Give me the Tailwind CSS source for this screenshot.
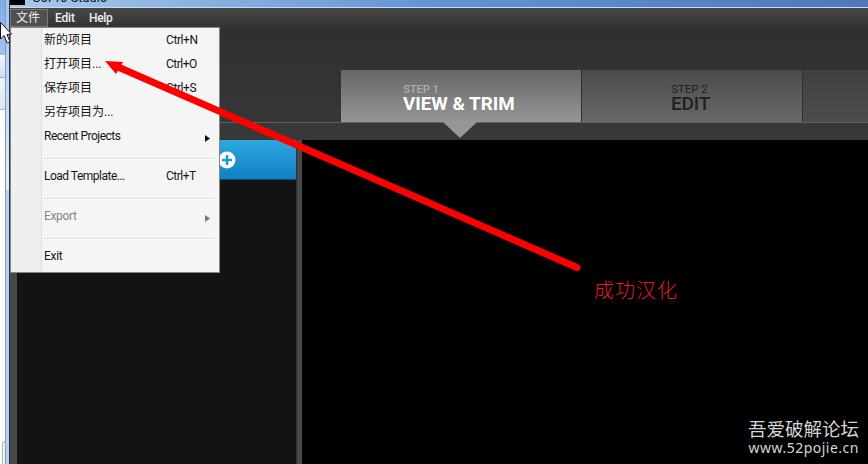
<!DOCTYPE html>
<html lang="zh-CN">
<head>
<meta charset="utf-8">
<title>GoPro Studio</title>
<script src="https://cdn.jsdelivr.net/npm/@tailwindcss/browser@4"></script>
</head>
<body class="relative flex h-[464px] w-[868px] overflow-hidden bg-white font-[Roboto,'Noto_Sans_CJK_SC',sans-serif]">
  <!-- Window behind and frame edge -->
  <aside class="flex h-full w-[9px] shrink-0">
    <div class="flex w-[5px] flex-col">
      <div class="h-[54px] bg-linear-to-b from-[#7fa9e6] to-[#a1c3f5]"></div>
      <div class="h-6 border-y border-[#a4b6cd] bg-linear-to-b from-[#f3f7fc] to-[#d3dfee]"></div>
      <div class="h-8 border-b border-[#a4b6cd] bg-linear-to-b from-[#eef3fa] to-[#dce7f5]"></div>
      <div class="grow bg-white"></div>
      <div class="ml-[2px] h-[23px] rounded-tl border-l border-t border-[#b5b5b5] bg-[#f2f2f2]"></div>
    </div>
    <div class="flex w-1 flex-col border-l border-[#809dc1]">
      <div class="h-[190px] bg-linear-to-b from-[#a4c5f2] to-[#e3edf9]"></div>
      <div class="grow bg-[#b9d0ef]"></div>
    </div>
  </aside>

  <main class="flex min-w-0 grow flex-col border-l border-[#28384c] bg-[#383838]">
    <header class="flex h-[8px] shrink-0 overflow-hidden border-b border-[#c3dcf4] bg-linear-to-r from-[#a9c9ed] via-[#6294d3] to-[#4e79b6]">
      <div class="h-[5px] w-[15px] bg-black"></div>
      <div class="ml-[7px] mt-[-9px] text-[12.5px] leading-[14px] tracking-[0.15px] text-[#111]">GoPro Studio</div>
    </header>
    <nav class="flex h-[22px] shrink-0 bg-linear-to-b from-[#484848] to-[#303030] text-[12px] font-medium leading-[18px] tracking-[-0.35px] text-[#eee]">
      <div class="mt-px h-[18px] w-[38px] border border-[#777] bg-[#505050] pl-[5px] font-normal leading-[16px] tracking-normal">文件</div>
      <div class="ml-[7px] mt-px w-[34px] tracking-[-0.2px]">Edit</div>
      <div class="mt-px">Help</div>
    </nav>
    <section class="flex h-[93px] shrink-0 items-end border-b border-[#606060] bg-linear-to-b from-[#303030] to-[#363636] pl-[331px]">
      <div class="relative h-[52px] w-[240px] bg-linear-to-b from-[#676767] to-[#969696] pl-[62px] pt-[13px]">
        <div class="text-[11.5px] font-medium leading-[12px] tracking-[-0.25px] text-[#adadad]">STEP 1</div>
        <div class="w-max origin-left scale-x-[0.99] whitespace-nowrap text-[19px] font-bold leading-[18px] text-white">VIEW &amp; TRIM</div>
        <svg class="absolute left-[102px] top-[52px]" width="34" height="17" viewBox="0 0 34 17"><path d="M0 0H34L17 16Z" fill="#979797"/></svg>
      </div>
      <div class="h-[52px] w-[222px] border-x border-[#303030] bg-linear-to-b from-[#4b4b4b] to-[#686868] pl-[89px] pt-[13px] text-[#202020]">
        <div class="text-[11.5px] leading-[12px]">STEP 2</div>
        <div class="text-[19px] font-medium leading-[18px] tracking-[-0.2px]">EDIT</div>
      </div>
      <div class="h-[52px] grow bg-linear-to-b from-[#404040] to-[#4c4c4c]"></div>
    </section>
    <div class="h-[17px] shrink-0 bg-[#383838]"></div>
    <section class="flex min-h-0 grow bg-[#484848]">
      <div class="ml-[7px] flex w-[280px] shrink-0 flex-col border-r border-[#303030] bg-[#131313]">
        <div class="flex h-10 items-center border-b border-[#0b4d76] bg-linear-to-b from-[#2ca9df] to-[#117fc2] pl-[201px]">
          <svg width="18" height="18" viewBox="0 0 18 18"><circle cx="9" cy="9" r="8.5" fill="#fff"/><path d="M9 4V14M4 9H14" stroke="#159bd7" stroke-width="2.4"/></svg>
        </div>
      </div>
      <div class="ml-[5px] flex grow flex-col items-end justify-end bg-black pb-[7px] pr-[9px] text-[#d5d5d5]">
        <div class="font-['Noto_Sans_CJK_SC',sans-serif] text-[18.5px] leading-[21px]">吾爱破解论坛</div>
        <div class="font-['Noto_Sans',sans-serif] text-[14px] leading-[18px] tracking-[0.5px]">www.52pojie.cn</div>
      </div>
    </section>
  </main>

  <!-- File menu -->
  <div class="absolute left-[10px] top-[27px] flex h-[246px] w-[210px] border border-[#858585] bg-[#f5f5f5] text-[12px] leading-6 text-[#151515]">
    <div class="w-[31px] shrink-0 border-r border-[#dedede] bg-[#efefef]"></div>
    <div class="grow pl-[2px] pr-[4px]">
      <div class="flex h-6"><span class="w-[122px]">新的项目</span><span class="tracking-[-0.4px]">Ctrl+N</span></div>
      <div class="flex h-6"><span class="w-[122px]">打开项目...</span><span class="tracking-[-0.5px]">Ctrl+O</span></div>
      <div class="flex h-6"><span class="w-[122px]">保存项目</span><span class="tracking-[-0.4px]">Ctrl+S</span></div>
      <div class="h-6">另存项目为...</div>
      <div class="flex h-6 items-center justify-between"><span class="tracking-[-0.5px]">Recent Projects</span><svg class="mr-[5px] mt-[5px]" width="5" height="7"><path d="M0 0L5 3.5L0 7Z" fill="#111"/></svg></div>
      <div class="flex h-4 items-end pb-1"><i class="h-0.5 w-full border-b border-white bg-[#dedede]"></i></div>
      <div class="flex h-6"><span class="w-[122px] tracking-[-0.5px]">Load Template...</span><span class="tracking-[-0.5px]">Ctrl+T</span></div>
      <div class="flex h-4 items-end pb-1"><i class="h-0.5 w-full border-b border-white bg-[#dedede]"></i></div>
      <div class="flex h-6 items-center justify-between text-[#858585]"><span class="tracking-[-0.35px]">Export</span><svg class="mr-[5px] mt-[5px]" width="5" height="7"><path d="M0 0L5 3.5L0 7Z" fill="#777"/></svg></div>
      <div class="flex h-4 items-end pb-1"><i class="h-0.5 w-full border-b border-white bg-[#dedede]"></i></div>
      <div class="h-6 tracking-[-0.3px]">Exit</div>
    </div>
  </div>

  <!-- Annotation and pointer -->
  <svg class="pointer-events-none absolute inset-0" width="868" height="464">
    <path d="M118 67L577 267.5" stroke="#f00" stroke-width="7" stroke-linecap="round"/>
    <path d="M105 61L123 62L120 67L116 74Z" fill="#f00"/>
    <path d="M0.5 22.5V39L4 35.5L7.2 43L10 41.8L7 34.5L11.5 34Z" fill="#fff" stroke="#111"/>
  </svg>
  <div class="absolute left-[594px] top-[277px] whitespace-nowrap font-['Noto_Sans_CJK_SC',sans-serif] text-[20px] font-light leading-[26px] tracking-[1px] text-[#e81824]">成功汉化</div>
</body>
</html>
